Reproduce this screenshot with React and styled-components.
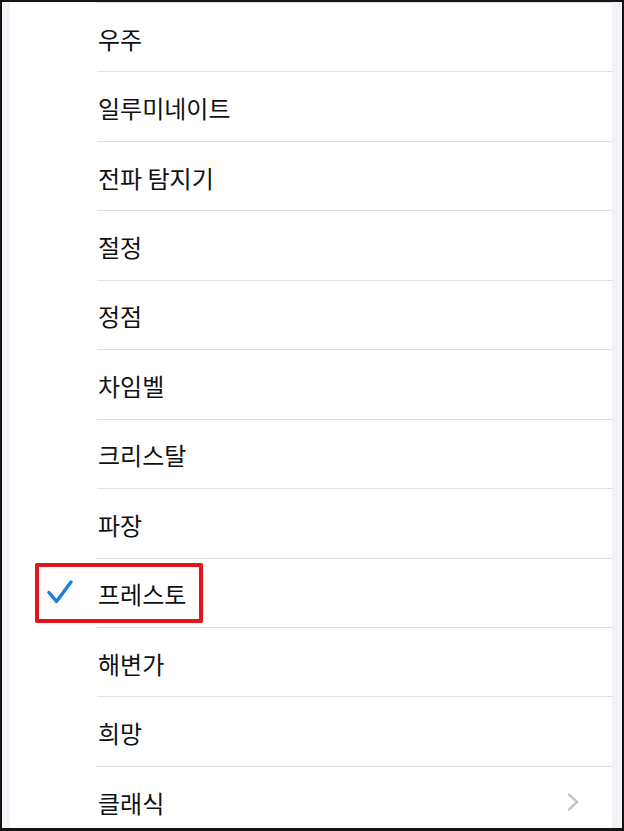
import React from "react"
import styled, { createGlobalStyle } from "styled-components"

const GlobalStyle = createGlobalStyle`
  html, body {
    margin: 0;
    padding: 0;
    background: #fff;
  }
  body {
    font-family: "Noto Sans CJK KR", "Noto Sans", sans-serif;
  }
`

const Frame = styled.div`
  width: 624px;
  height: 831px;
  box-sizing: border-box;
  border-style: solid;
  border-color: #141414;
  border-width: 2px 2px 3px 2px;
  background: #f2f2f7;
  padding: 0 10px 0 8px;
  display: flex;
  overflow: hidden;
`

const List = styled.div`
  flex: 1;
  background: #fff;
  display: flex;
  flex-direction: column;
`

const TopRule = styled.div`
  margin: 0 0 -1px 87px;
  border-top: 1px solid #e0e0e2;
`

const Row = styled.div`
  position: relative;
  height: 69.45px;
  flex-shrink: 0;
  display: flex;
`

const CheckSlot = styled.div`
  width: 87px;
  flex-shrink: 0;
  display: flex;
  align-items: center;
  padding-left: 37px;
  box-sizing: border-box;
`

const Body = styled.div`
  flex: 1;
  border-top: 1px solid #e0e0e2;
  display: flex;
  align-items: center;
  justify-content: space-between;
  padding: 2px 31px 0 1px;
`

const Label = styled.span`
  font-size: 24px;
  font-weight: 400;
  color: #111;
`

const Highlight = styled.div`
  position: absolute;
  left: 25px;
  top: 5px;
  width: 168px;
  height: 60px;
  box-sizing: border-box;
  border: 4px solid #e3141c;
  border-radius: 2px;
`

const CheckMark = () => (
  <svg width="26" height="24" viewBox="0 0 26 24">
    <polyline
      points="2,12.5 9.5,21.5 24,2"
      fill="none"
      stroke="#1f7be4"
      strokeWidth="3.4"
      strokeLinecap="round"
      strokeLinejoin="round"
    />
  </svg>
)

const Chevron = () => (
  <svg width="14" height="18" viewBox="0 0 14 18">
    <polyline
      points="2,1.5 10,9 2,16.5"
      fill="none"
      stroke="#c4c4c7"
      strokeWidth="2.4"
      strokeLinecap="round"
      strokeLinejoin="round"
    />
  </svg>
)

const tones = [
  { name: "우주" },
  { name: "일루미네이트" },
  { name: "전파 탐지기" },
  { name: "절정" },
  { name: "정점" },
  { name: "차임벨" },
  { name: "크리스탈" },
  { name: "파장" },
  { name: "프레스토", selected: true },
  { name: "해변가" },
  { name: "희망" },
  { name: "클래식", more: true },
]

export default function App() {
  return (
    <>
      <GlobalStyle />
      <Frame>
        <List>
          <TopRule />
          {tones.map(t => (
            <Row key={t.name}>
              <CheckSlot>{t.selected && <CheckMark />}</CheckSlot>
              <Body>
                <Label>{t.name}</Label>
                {t.more && <Chevron />}
              </Body>
              {t.selected && <Highlight />}
            </Row>
          ))}
        </List>
      </Frame>
    </>
  )
}
